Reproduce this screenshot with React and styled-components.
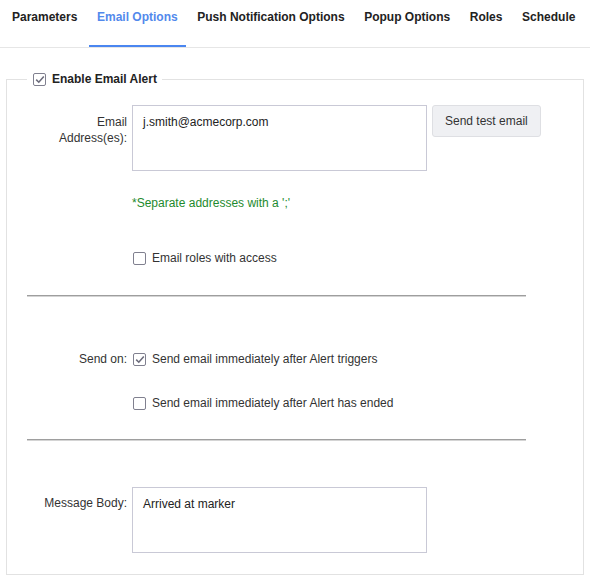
import React from "react";
import styled, { createGlobalStyle } from "styled-components";

const GlobalStyle = createGlobalStyle`
  html, body {
    margin: 0;
    padding: 0;
    background: #fff;
  }
  body {
    font-family: "Liberation Sans", Arial, sans-serif;
    font-size: 12px;
    color: #333;
  }
`;

const Page = styled.div`
  width: 590px;
  min-height: 582px;
  background: #fff;
`;

const TabBar = styled.nav`
  display: flex;
  height: 47px;
  padding-left: 4px;
  border-bottom: 1px solid #e6e6e6;
`;

const Tab = styled.div`
  box-sizing: border-box;
  height: 47px;
  padding: 10px 8px 0;
  margin-right: 3.6px;
  font-size: 12px;
  line-height: 14px;
  font-weight: 700;
  white-space: nowrap;
  cursor: pointer;
  color: ${(p) => (p.$active ? "#5289ec" : "#222")};
  border-bottom: 2px solid ${(p) => (p.$active ? "#4a86f0" : "transparent")};
`;

const Fieldset = styled.fieldset`
  margin: 23px 6px 0;
  padding: 0 20px 21px;
  border: 1px solid #e2e2e2;
  min-width: 0;
`;

const Legend = styled.legend`
  display: flex;
  align-items: center;
  gap: 6px;
  padding: 0 5px 0 6px;
  font-size: 12px;
  line-height: 16px;
  font-weight: 700;
  color: #222;
`;

const Box = styled.span`
  box-sizing: border-box;
  display: inline-flex;
  align-items: center;
  justify-content: center;
  flex: none;
  width: 13px;
  height: 13px;
  margin-left: ${(p) => p.$ml || 0}px;
  border: 1px solid #80808f;
  border-radius: 2px;
  background: #fff;
`;

const Form = styled.div`
  display: flex;
  flex-direction: column;
  padding-top: 18px;
`;

const Row = styled.div`
  display: grid;
  grid-template-columns: 100px 1fr;
  column-gap: 5px;
  align-items: ${(p) => (p.$center ? "center" : "start")};
  margin-top: ${(p) => p.$mt || 0}px;
`;

const Label = styled.div`
  text-align: right;
  font-size: 12px;
  line-height: 16px;
  color: #333;
  padding-top: ${(p) => p.$pt || 0}px;
`;

const Field = styled.div`
  display: flex;
  align-items: flex-start;
`;

const TextArea = styled.textarea`
  box-sizing: border-box;
  width: 295px;
  height: 66px;
  padding: 9px 10px 8px;
  border: 1px solid #c9c9d6;
  border-radius: 0;
  resize: none;
  font-family: "Liberation Sans", Arial, sans-serif;
  font-size: 12px;
  line-height: 14px;
  color: #222;
  outline: none;
`;

const Button = styled.button`
  box-sizing: border-box;
  height: 32px;
  margin-left: 5px;
  padding: 0 12px;
  background: #eff0f3;
  border: 1px solid #dedfe3;
  border-radius: 3px;
  font-family: "Liberation Sans", Arial, sans-serif;
  font-size: 12px;
  color: #333;
  cursor: pointer;
`;

const Note = styled.div`
  font-size: 12px;
  line-height: 16px;
  color: #1e8a2e;
`;

const Check = styled.label`
  display: flex;
  align-items: center;
  gap: 6px;
  font-size: 12px;
  line-height: 16px;
  color: #333;
`;

const Divider = styled.div`
  width: 499px;
  height: 0;
  margin-top: ${(p) => p.$mt || 0}px;
  border-top: 1px solid #9e9e9e;
  border-bottom: 1px solid #d4d4d4;
`;

const tabs = [
  "Parameters",
  "Email Options",
  "Push Notification Options",
  "Popup Options",
  "Roles",
  "Schedule",
];

const Checkbox = ({ checked, ml }) => (
  <Box $ml={ml}>
    {checked && (
      <svg width="10" height="9" viewBox="0 0 10 9">
        <path d="M1.2 4.6 L3.8 7.2 L8.8 1.4" fill="none" stroke="#6c6c7c" strokeWidth="1.6" />
      </svg>
    )}
  </Box>
);

export default function App() {
  return (
    <Page>
      <GlobalStyle />
      <TabBar>
        {tabs.map((t) => (
          <Tab key={t} $active={t === "Email Options"}>
            {t}
          </Tab>
        ))}
      </TabBar>

      <Fieldset>
        <Legend>
          <Checkbox checked />
          Enable Email Alert
        </Legend>
        <Form>
          <Row>
            <Label $pt={9}>
              Email
              <br />
              Address(es):
            </Label>
            <Field>
              <TextArea defaultValue="j.smith@acmecorp.com" />
              <Button>Send test email</Button>
            </Field>
          </Row>

          <Row $mt={24}>
            <span />
            <Note>*Separate addresses with a ';'</Note>
          </Row>

          <Row $mt={39}>
            <span />
            <Check>
              <Checkbox ml={1} />
              Email roles with access
            </Check>
          </Row>

          <Divider $mt={29} />

          <Row $mt={54} $center>
            <Label>Send on:</Label>
            <Check>
              <Checkbox checked ml={1} />
              Send email immediately after Alert triggers
            </Check>
          </Row>

          <Row $mt={28}>
            <span />
            <Check>
              <Checkbox ml={1} />
              Send email immediately after Alert has ended
            </Check>
          </Row>

          <Divider $mt={28} />

          <Row $mt={46}>
            <Label $pt={8}>Message Body:</Label>
            <Field>
              <TextArea defaultValue="Arrived at marker" />
            </Field>
          </Row>
        </Form>
      </Fieldset>
    </Page>
  );
}
